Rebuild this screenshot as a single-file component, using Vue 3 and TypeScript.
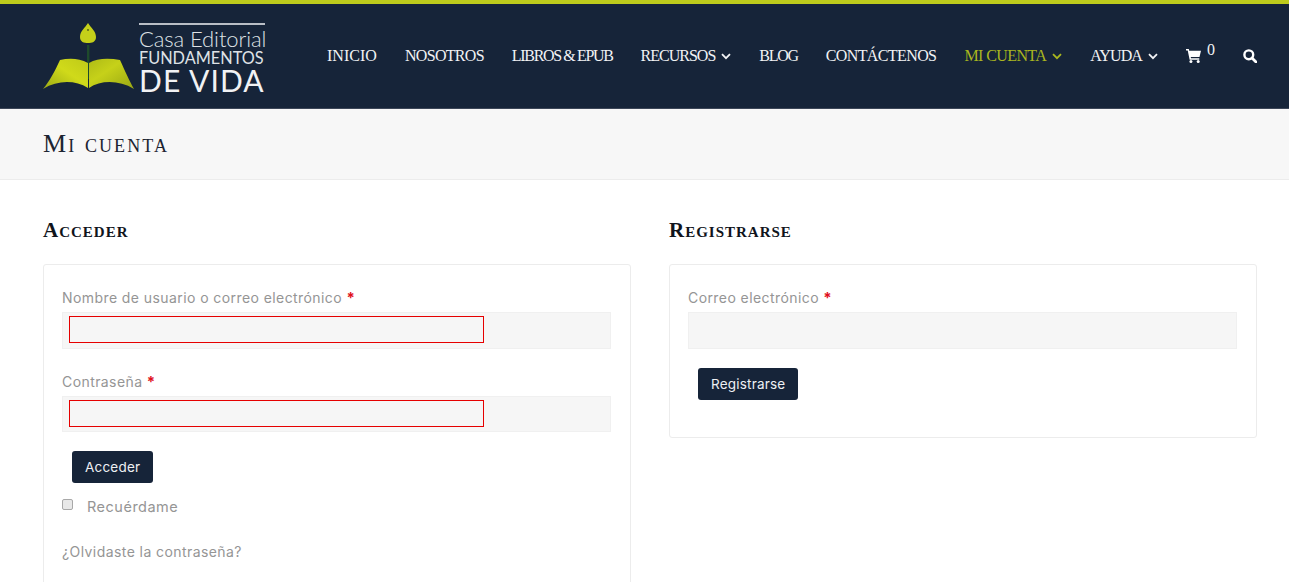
<script setup lang="ts">
interface NavItem {
  label: string
  track: number
  caret?: boolean
  active?: boolean
  tight?: boolean
}

// tracking per item, the serif here is narrower on some letters than the original one
const navItems: NavItem[] = [
  { label: 'Inicio', track: 0.05 },
  { label: 'Nosotros', track: -0.7 },
  { label: 'Libros & ePub', track: -1.3, tight: true },
  { label: 'Recursos', track: -1, caret: true },
  { label: 'Blog', track: -1.3 },
  { label: 'Contáctenos', track: -0.6 },
  { label: 'Mi cuenta', track: -0.6, caret: true, active: true },
  { label: 'Ayuda', track: -0.9, caret: true },
]
</script>

<template>
  <div class="page">
    <header class="header">
      <div class="logo">
        <svg class="logo-mark" width="92" height="68" viewBox="0 0 92 68">
          <defs>
            <linearGradient id="pageLeft" x1="0" x2="1" y1="1" y2="0">
              <stop offset="0" stop-color="#9aa815" />
              <stop offset="0.55" stop-color="#d0da1a" />
              <stop offset="1" stop-color="#bfca18" />
            </linearGradient>
            <linearGradient id="pageRight" x1="1" x2="0" y1="1" y2="0">
              <stop offset="0" stop-color="#98a614" />
              <stop offset="0.6" stop-color="#c6d119" />
              <stop offset="1" stop-color="#aebb16" />
            </linearGradient>
          </defs>
          <path d="M45 0C48 5 53 8 53 14C53 19 49 20 45 20C41 20 37 19 37 14C37 8 42 5 45 0Z" fill="#c5d01a" />
          <circle cx="45" cy="7" r="0.9" fill="#4c5a14" />
          <rect x="44" y="22" width="2.4" height="34" fill="#1e4a2c" />
          <path d="M45 40C36 35 26 35 17 37C12 48 6 59 0 66C15 57 32 57 45 65Z" fill="url(#pageLeft)" />
          <path d="M46 40C54 35 66 35 77 37C82 48 87 59 91 66C76 57 58 57 46 65Z" fill="url(#pageRight)" />
        </svg>
        <div class="logo-text">
          <span class="logo-casa">Casa Editorial</span>
          <span class="logo-fund">FUNDAMENTOS</span>
          <span class="logo-vida">DE VIDA</span>
        </div>
      </div>
      <nav class="nav">
        <a
          v-for="item in navItems"
          :key="item.label"
          class="nav-link"
          :class="{ active: item.active, tight: item.tight }"
          :style="{ letterSpacing: item.track + 'px' }"
        >
          {{ item.label }}
          <svg v-if="item.caret" class="caret" width="10" height="7" viewBox="0 0 10 7">
            <path d="M1 1.2L5 5.2L9 1.2" fill="none" stroke="currentColor" stroke-width="1.8" />
          </svg>
        </a>
        <a class="nav-cart">
          <svg width="15" height="14" viewBox="0 0 14 13">
            <path d="M0 0H2.6L3 1.6H14L12.6 7.4H4.4L4.7 8.6H12.4V10H3.4L1.6 1.4H0Z" fill="#fff" />
            <circle cx="4.6" cy="11.6" r="1.4" fill="#fff" />
            <circle cx="11.4" cy="11.6" r="1.4" fill="#fff" />
          </svg>
          <sup class="cart-count">0</sup>
        </a>
        <a class="nav-search">
          <svg width="14" height="14" viewBox="0 0 14 14">
            <circle cx="5.8" cy="5.8" r="4.4" fill="none" stroke="#fff" stroke-width="2.4" />
            <path d="M9 9L13 13" stroke="#fff" stroke-width="2.8" stroke-linecap="round" />
          </svg>
        </a>
      </nav>
    </header>

    <div class="title-band">
      <h1>Mi cuenta</h1>
    </div>

    <main class="columns">
      <section>
        <h2>Acceder</h2>
        <div class="card login">
          <label>Nombre de usuario o correo electrónico <b>*</b></label>
          <div class="field"><div class="field-outline"></div></div>
          <label class="second">Contraseña <b>*</b></label>
          <div class="field short"><div class="field-outline"></div></div>
          <button class="btn" type="button">Acceder</button>
          <div class="remember">
            <span class="check"></span>
            <span>Recuérdame</span>
          </div>
          <a class="lost">¿Olvidaste la contraseña?</a>
        </div>
      </section>
      <section>
        <h2>Registrarse</h2>
        <div class="card">
          <label>Correo electrónico <b>*</b></label>
          <div class="field"></div>
          <button class="btn" type="button">Registrarse</button>
        </div>
      </section>
    </main>
  </div>
</template>

<style>
html,
body {
  overflow: hidden;
  background: #fff;
}
</style>

<style scoped>
.page {
  height: 582px;
  overflow: hidden;
  font-family: "Inter", "Liberation Sans", sans-serif;
  color: #959595;
}

.header {
  height: 104px;
  border-top: 4px solid #bdcb1c;
  border-bottom: 1px solid #3c4658;
  background: #162439;
  display: flex;
  align-items: center;
  justify-content: space-between;
  padding: 0 32px 0 43px;
  box-sizing: content-box;
}

.logo {
  display: flex;
  align-items: flex-end;
  gap: 4px;
  height: 68px;
  margin-top: 1px;
}

.logo-text {
  display: flex;
  flex-direction: column;
  width: 126px;
  border-top: 2px solid #b9bec6;
  color: #dfe2e6;
  font-family: "Lato", "Liberation Sans", sans-serif;
  font-weight: 300;
  line-height: 1;
  white-space: nowrap;
}

.logo-casa {
  font-size: 22px;
  letter-spacing: -0.1px;
  margin-top: 3px;
  height: 22px;
}

.logo-fund {
  font-size: 16.3px;
  font-weight: 400;
  height: 15px;
}

.logo-vida {
  font-size: 30px;
  font-weight: 400;
  height: 26px;
  letter-spacing: 1.1px;
  color: #f1f2f4;
}

.nav {
  display: flex;
  align-items: center;
  gap: 28px;
  font-family: "Liberation Serif", serif;
  color: #f2f3f5;
  margin-top: -1px;
}

.nav-link {
  display: flex;
  align-items: center;
  gap: 6px;
  font-size: 16px;
  text-transform: uppercase;
  white-space: nowrap;
}

.nav-link.tight {
  word-spacing: -0.3px;
}

.nav-link.active {
  color: #a9b61f;
}

.caret {
  margin-top: 1px;
}

.nav-cart {
  display: flex;
  align-items: center;
  gap: 6px;
}

.cart-count {
  font-size: 16px;
  line-height: 1;
  margin: -12px 0 0;
}

.nav-search {
  display: flex;
}

.title-band {
  height: 70px;
  background: #f7f7f7;
  border-bottom: 1px solid #ececec;
  display: flex;
  align-items: center;
  padding-left: 43px;
}

h1 {
  margin: 0;
  font-family: "Liberation Serif", serif;
  font-size: 26px;
  font-weight: 400;
  font-variant: small-caps;
  letter-spacing: 2.1px;
  color: #1c2431;
}

.columns {
  display: grid;
  grid-template-columns: 588px 588px;
  gap: 38px;
  padding: 40px 0 0 43px;
}

h2 {
  margin: 0 0 23px;
  height: 21px;
  line-height: 21px;
  font-family: "Liberation Serif", serif;
  font-size: 21px;
  font-weight: 700;
  font-variant: small-caps;
  letter-spacing: 1px;
  color: #10141c;
}

.card {
  border: 1px solid #ececec;
  border-radius: 3px;
  padding: 24px 19px 37px 18px;
  box-sizing: border-box;
  height: 174px;
}

.card.login {
  height: 360px;
}

label {
  display: block;
  font-size: 14px;
  line-height: 18px;
  height: 23px;
  letter-spacing: 0.42px;
}

label b {
  color: #e0101c;
  font-size: 15px;
  font-weight: 700;
}

label.second {
  margin-top: 24px;
}

.field {
  height: 37px;
  background: #f6f6f6;
  border: 1px solid #f0f0f0;
  box-sizing: border-box;
  padding: 3px 6px;
}

.field.short {
  height: 36px;
}

.field-outline {
  width: 415px;
  height: 27px;
  border: 1px solid #e60000;
  box-sizing: border-box;
}

.btn {
  display: block;
  margin: 19px 0 0 10px;
  height: 32px;
  padding: 0 13px;
  border: 0;
  border-radius: 3px;
  background: #162439;
  color: #eef0f3;
  font-family: inherit;
  font-size: 13.5px;
  letter-spacing: 0.2px;
}

.remember {
  display: flex;
  align-items: center;
  gap: 14px;
  margin-top: 13px;
  height: 20px;
  font-size: 14.5px;
  letter-spacing: 0.5px;
}

.check {
  width: 11px;
  height: 11px;
  margin-top: -3px;
  border: 1px solid #a8a8a8;
  border-radius: 2px;
  background: #e8e8e8;
  box-sizing: border-box;
}

.lost {
  display: block;
  margin-top: 27px;
  font-size: 14px;
  letter-spacing: 0.42px;
}
</style>
